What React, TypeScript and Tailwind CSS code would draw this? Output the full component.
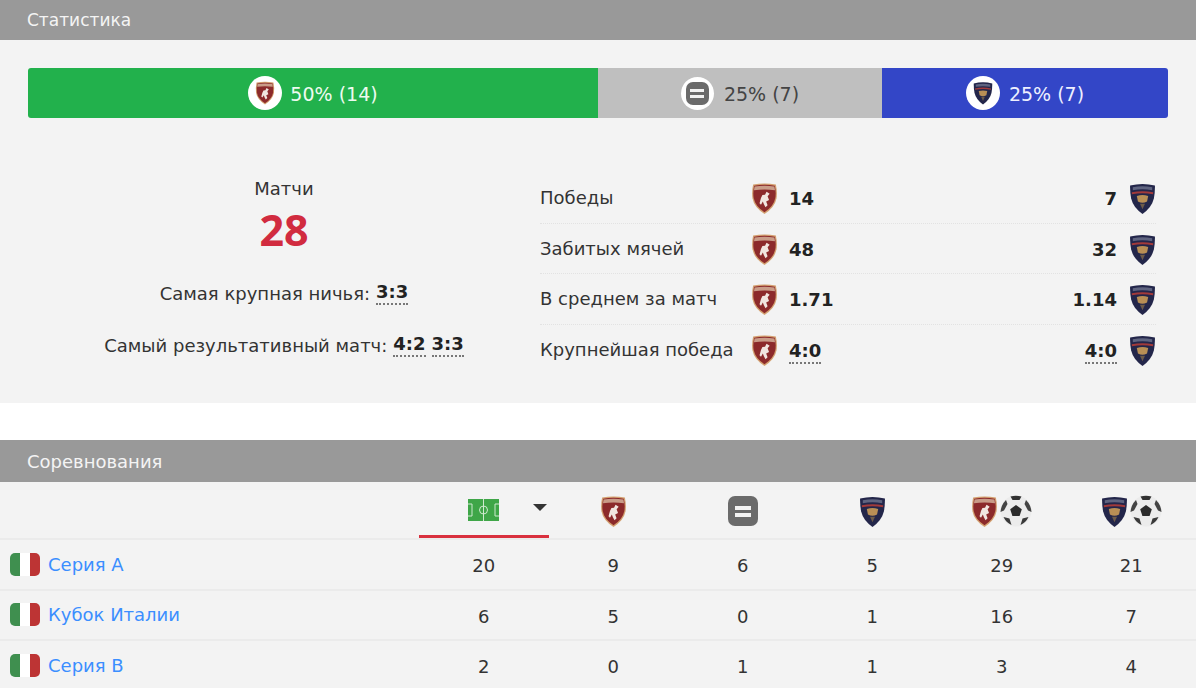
const font = "font-['DejaVu_Sans','Liberation_Sans',sans-serif]";

function TorinoBadge({ className = 'h-[31px] w-[27px]' }: { className?: string }) {
  return (
    <svg viewBox="0 0 26 30" className={`blur-[0.4px] ${className}`}>
      <path d="M2 1.5 Q13 -0.5 24 1.5 Q25.6 9 24.6 15 Q23 23.5 13 30 Q3 23.5 1.4 15 Q0.4 9 2 1.5 Z" fill="#d3a070" />
      <path d="M3 2.6 Q13 1 23 2.6 Q24.4 9 23.5 14.6 Q22 22.5 13 28.4 Q4 22.5 2.5 14.6 Q1.6 9 3 2.6 Z" fill="#8c2a2b" />
      <path d="M3.4 3.4 Q13 2 22.6 3.4 L23.2 7 Q13 5.6 2.8 7 Z" fill="#c99c88" />
      <path d="M15 8.5 L18 10.5 L16 12.8 L17.4 16.5 L14.6 18 L16 21.5 L14 23.5 L12.4 20.5 L11.4 17.8 L9.6 21 L8.2 19.6 L9.6 14.6 L11 11.6 L13.5 11.4 Z" fill="#f1e6e0" />
    </svg>
  );
}

function LecceBadge({ className = 'h-[31px] w-[27px]' }: { className?: string }) {
  return (
    <svg viewBox="0 0 26 30" className={`blur-[0.4px] ${className}`}>
      <path d="M1 2.5 Q13 -0.5 25 2.5 Q25.2 9 24 15 Q22 23.5 13 30 Q4 23.5 2 15 Q0.8 9 1 2.5 Z" fill="#23264a" />
      <path d="M2.6 9 Q13 7 23.4 9 L23.2 10.8 Q13 8.8 2.8 10.8 Z" fill="#a33a3a" />
      <path d="M7.5 12.5 Q13 10.8 18.5 12.5 L17.4 18 Q13 20.4 8.6 18 Z" fill="#b98f55" />
      <path d="M10.6 20 L15.4 20 L13 25.5 Z" fill="#6d5b4a" />
      <path d="M3.6 4 Q13 2.2 22.4 4 L22.4 7 Q13 5.2 3.6 7 Z" fill="#5f6480" />
    </svg>
  );
}

function DrawIcon({ className = 'h-[30px] w-[30px]', bar = 'h-[4px] w-[16px]' }: { className?: string; bar?: string }) {
  return (
    <span className={`flex flex-col items-center justify-center gap-[3px] rounded-[7px] bg-[#6b6b6b] blur-[0.4px] ${className}`}>
      <span className={`bg-[#f3f3f3] ${bar}`} />
      <span className={`bg-[#f3f3f3] ${bar}`} />
    </span>
  );
}

function Ball() {
  return (
    <svg viewBox="0 0 32 32" className="h-[32px] w-[32px] blur-[0.5px]">
      <circle cx="16" cy="16" r="15.5" fill="#ececec" />
      <path d="M16 10 L21.8 14.2 L19.6 21 H12.4 L10.2 14.2 Z" fill="#2b2b2b" />
      <path d="M10.5 1.5 Q16 0 21.5 1.5 L19.5 5 H12.5 Z" fill="#333" />
      <path d="M26 5 Q31 10 31.5 17 L28 15.5 L24.5 9 Z" fill="#444" />
      <path d="M6 5 Q1 10 .5 17 L4 15.5 L7.5 9 Z" fill="#444" />
      <path d="M3.5 22 L9.5 23.5 L11.5 30 Q6 27.5 3.5 22 Z" fill="#3a3a3a" />
      <path d="M28.5 22 L22.5 23.5 L20.5 30 Q26 27.5 28.5 22 Z" fill="#3a3a3a" />
    </svg>
  );
}

function Flag() {
  return (
    <span className="flex h-[23px] w-[30px] overflow-hidden rounded-[5px] blur-[0.4px]">
      <span className="flex-1 bg-[#3f8f4f]" />
      <span className="flex-1 bg-white" />
      <span className="flex-1 bg-[#bd3434]" />
    </span>
  );
}

function Pitch() {
  return (
    <svg viewBox="0 0 31 22" className="h-[22px] w-[31px] blur-[0.4px]">
      <rect width="31" height="22" fill="#3fa648" />
      <g fill="none" stroke="#cfe9cf" strokeWidth="1">
        <path d="M15.5 0 V22" />
        <circle cx="15.5" cy="11" r="4" />
        <path d="M0 5 H4 V17 H0" />
        <path d="M31 5 H27 V17 H31" />
      </g>
    </svg>
  );
}

function Score({ children }: { children: string }) {
  return <span className="border-b-2 border-dotted border-[#777] pb-[1px] font-bold leading-[20px] text-[#222]">{children}</span>;
}

function SectionHeader({ title, className }: { title: string; className: string }) {
  return <div className={`flex items-center bg-[#999999] pl-[27px] text-[#f4f4f4] ${className}`}>{title}</div>;
}

const statRows = [
  { label: 'Победы', home: '14', away: '7' },
  { label: 'Забитых мячей', home: '48', away: '32' },
  { label: 'В среднем за матч', home: '1.71', away: '1.14' },
  { label: 'Крупнейшая победа', home: '4:0', away: '4:0', scored: true },
];

const competitions = [
  { name: 'Серия А', values: ['20', '9', '6', '5', '29', '21'] },
  { name: 'Кубок Италии', values: ['6', '5', '0', '1', '16', '7'] },
  { name: 'Серия В', values: ['2', '0', '1', '1', '3', '4'] },
];

export default function App() {
  return (
    <div className={`h-[688px] w-[1196px] overflow-hidden bg-white text-[18px] text-[#333] ${font}`}>
      <SectionHeader title="Статистика" className="h-[40px] pt-[2px] text-[17px]" />
      <section className="h-[363px] bg-[#f3f3f3] px-[28px] pt-[28px]">
        <div className="flex h-[50px] w-[1140px] overflow-hidden rounded-[3px] text-[19px]">
          <div className="flex w-[570px] items-center justify-center gap-[8px] bg-[#22b14c] text-[#eefbf0]">
            <span className="flex h-[34px] w-[34px] items-center justify-center rounded-full bg-white">
              <TorinoBadge className="h-[24px] w-[20px]" />
            </span>
            <span className="pt-[2px]">50% (14)</span>
          </div>
          <div className="flex w-[284px] items-center justify-center gap-[10px] bg-[#bfbfbf] text-[#444]">
            <span className="flex h-[33px] w-[33px] items-center justify-center rounded-full bg-white">
              <DrawIcon className="h-[23px] w-[23px]" bar="h-[3px] w-[14px]" />
            </span>
            <span className="pt-[2px]">25% (7)</span>
          </div>
          <div className="flex w-[286px] items-center justify-center gap-[9px] bg-[#3346c7] text-[#eef0ff]">
            <span className="flex h-[34px] w-[34px] items-center justify-center rounded-full bg-white">
              <LecceBadge className="h-[24px] w-[20px]" />
            </span>
            <span className="pt-[2px]">25% (7)</span>
          </div>
        </div>

        <div className="mt-[55px] flex">
          <div className="flex w-[512px] flex-col items-center">
            <div className="mt-[3px] leading-[26px]">Матчи</div>
            <div className="mt-[3px] font-['Noto_Sans',sans-serif] text-[43px] font-bold leading-[50px] text-[#d12b3f]">28</div>
            <div className="mt-[25px] flex h-[26px] items-center gap-[6px]">
              Самая крупная ничья: <Score>3:3</Score>
            </div>
            <div className="mt-[26px] flex h-[26px] items-center gap-[6px]">
              Самый результативный матч: <Score>4:2</Score> <Score>3:3</Score>
            </div>
          </div>

          <div className="w-[616px]">
            {statRows.map((row, i) => (
              <div
                key={row.label}
                className={`flex h-[50.5px] items-center ${i < statRows.length - 1 ? 'border-b border-dotted border-[#e2e2e2]' : ''}`}
              >
                <span className="w-[211px] whitespace-nowrap">{row.label}</span>
                <TorinoBadge className="mt-[2px] h-[31px] w-[27px]" />
                <span className="ml-[11px] flex-1 pt-[2px] font-bold text-[#222]">
                  {row.scored ? <Score>{row.home}</Score> : row.home}
                </span>
                <span className="mr-[12px] pt-[2px] font-bold text-[#222]">
                  {row.scored ? <Score>{row.away}</Score> : row.away}
                </span>
                <LecceBadge className="mt-[2px] h-[31px] w-[27px]" />
              </div>
            ))}
          </div>
        </div>
      </section>

      <div className="h-[37px]" />
      <SectionHeader title="Соревнования" className="h-[42px] text-[18px]" />
      <section className="bg-[#f3f3f3]">
        <div className="grid h-[58px] grid-cols-[419px_repeat(6,129.5px)] items-center border-b-2 border-[#ebebeb]">
          <div />
          <div className="relative flex h-full items-center justify-center border-b-[3px] border-[#d9303e] pt-[2px]">
            <Pitch />
            <span className="absolute right-[2px] top-[22px] h-0 w-0 border-x-[7px] border-t-[7px] border-x-transparent border-t-[#333]" />
          </div>
          <div className="flex justify-center pt-[2px]"><TorinoBadge /></div>
          <div className="flex justify-center pt-[2px]"><DrawIcon /></div>
          <div className="flex justify-center pt-[2px]"><LecceBadge /></div>
          <div className="flex items-center justify-center gap-[2px] pt-[2px]"><TorinoBadge /><Ball /></div>
          <div className="flex items-center justify-center gap-[2px] pt-[2px]"><LecceBadge /><Ball /></div>
        </div>
        {competitions.map((c) => (
          <div key={c.name} className="grid h-[50.5px] grid-cols-[419px_repeat(6,129.5px)] items-center border-b-2 border-[#ebebeb]">
            <div className="flex items-center gap-[8px] pl-[10px]">
              <Flag />
              <span className="text-[#3b8eff]">{c.name}</span>
            </div>
            {c.values.map((v, i) => (
              <div key={i} className="pt-[3px] text-center text-[#333]">{v}</div>
            ))}
          </div>
        ))}
      </section>
    </div>
  );
}
